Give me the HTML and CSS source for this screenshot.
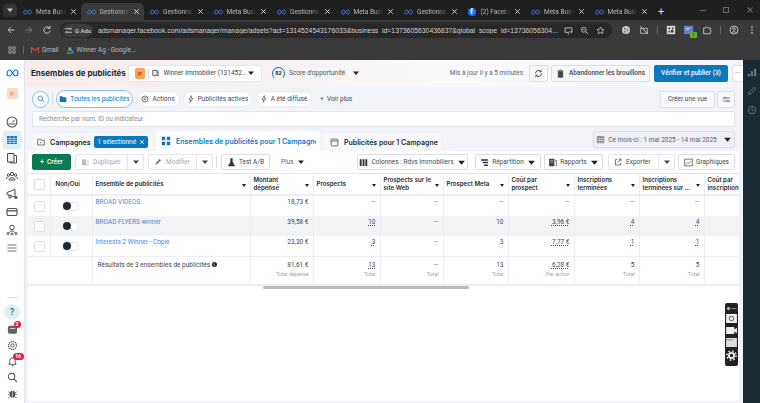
FILE: index.html
```html
<!DOCTYPE html>
<html lang="fr">
<head>
    <meta charset="UTF-8">
    <title>Ensembles de publicités</title>
    <link rel="stylesheet" href="styles.css">
</head>
<body>
    <svg class="defs" width="0" height="0">
        <symbol id="meta" viewBox="0 0 24 14"><path d="M2 9.500C2 5 4 1.500 6.500 1.500c4 0 7 11 11 11 2.500 0 4.500-2 4.500-5.500S20 1.500 17.500 1.500c-4 0-7 11-11 11C3.500 12.500 2 11.500 2 9.500z" fill="none" stroke="currentColor" stroke-width="2.200"/></symbol>
        <symbol id="caret" viewBox="0 0 8 8"><path d="M1 2.500h6L4 6z" fill="currentColor"/></symbol>
        <symbol id="close" viewBox="0 0 8 8"><path d="M1.500 1.500l5 5M6.500 1.500l-5 5" stroke="currentColor" stroke-width="1.100" fill="none"/></symbol>
    </svg>

    <div class="tabstrip">
        <span class="tab-menu"><svg class="i6"><use href="#caret"/></svg></span>
        <div class="tab"><svg class="tab-icon"><use href="#meta"/></svg><span class="tab-label">Meta Busir</span><svg class="tab-x"><use href="#close"/></svg></div>
        <div class="tab active"><svg class="tab-icon"><use href="#meta"/></svg><span class="tab-label">Gestionnai</span><svg class="tab-x"><use href="#close"/></svg></div>
        <div class="tab"><svg class="tab-icon"><use href="#meta"/></svg><span class="tab-label">Gestionnai</span><svg class="tab-x"><use href="#close"/></svg></div>
        <div class="tab"><svg class="tab-icon"><use href="#meta"/></svg><span class="tab-label">Meta Busir</span><svg class="tab-x"><use href="#close"/></svg></div>
        <div class="tab"><svg class="tab-icon"><use href="#meta"/></svg><span class="tab-label">Gestionnai</span><svg class="tab-x"><use href="#close"/></svg></div>
        <div class="tab"><svg class="tab-icon"><use href="#meta"/></svg><span class="tab-label">Meta Busir</span><svg class="tab-x"><use href="#close"/></svg></div>
        <div class="tab"><svg class="tab-icon"><use href="#meta"/></svg><span class="tab-label">Gestionnai</span><svg class="tab-x"><use href="#close"/></svg></div>
        <div class="tab"><span class="fb-icon">f</span><span class="tab-label">(2) Facebo</span><svg class="tab-x"><use href="#close"/></svg></div>
        <div class="tab"><svg class="tab-icon"><use href="#meta"/></svg><span class="tab-label">Meta Busir</span><svg class="tab-x"><use href="#close"/></svg></div>
        <div class="tab"><svg class="tab-icon"><use href="#meta"/></svg><span class="tab-label">Meta Busir</span><svg class="tab-x"><use href="#close"/></svg></div>
        <span class="new-tab">+</span>
        <div class="window-controls">
            <span class="win-min"></span>
            <span class="win-max"></span>
            <svg class="win-close"><use href="#close"/></svg>
        </div>
    </div>

    <div class="toolbar">
        <div class="nav-buttons">
            <svg viewBox="0 0 12 12"><path d="M10 6H2.500M6 2.500L2.500 6 6 9.500" fill="none" stroke="#c7c7c7" stroke-width="1.200"/></svg>
            <svg viewBox="0 0 12 12"><path d="M2 6h7.500M6 2.500L9.500 6 6 9.500" fill="none" stroke="#777" stroke-width="1.200"/></svg>
            <svg viewBox="0 0 12 12"><path d="M9.800 6.500a3.800 3.800 0 1 1-1-3M9.500 1v3H6.500" fill="none" stroke="#c7c7c7" stroke-width="1.200"/></svg>
        </div>
        <div class="omnibox">
            <span class="chip"><svg viewBox="0 0 8 8"><path d="M0 2h5M7 2h1M0 6h1M3 6h5" stroke="#ccc" stroke-width="1"/><circle cx="6" cy="2" r="1" fill="none" stroke="#ccc" stroke-width=".8"/><circle cx="2" cy="6" r="1" fill="none" stroke="#ccc" stroke-width=".8"/></svg>G Ads</span>
            <span class="url">adsmanager.facebook.com/adsmanager/manage/adsets?act=1314524543176033&amp;business_id=1373605630436837&amp;global_scope_id=13736056304...</span>
            <div class="omni-icons">
                <svg viewBox="0 0 12 12"><path d="M9.500 8.500h1v-6h-9v6h5M5 10.500h2" fill="none" stroke="#ccc" stroke-width="1.100"/><path d="M7 6.500l2 2 2-2" fill="none" stroke="#ccc"/></svg>
                <svg viewBox="0 0 12 12"><circle cx="5" cy="5" r="3.300" fill="none" stroke="#ccc" stroke-width="1.100"/><path d="M7.500 7.500l3 3M3.500 5h3" stroke="#ccc" stroke-width="1.100"/></svg>
                <svg viewBox="0 0 12 12"><path d="M6 1.300l1.400 3 3.300.4-2.400 2.200.6 3.300L6 8.600l-2.900 1.600.6-3.300-2.400-2.200 3.300-.4z" fill="none" stroke="#ccc" stroke-width="1"/></svg>
            </div>
        </div>
        <div class="ext-icons">
            <svg viewBox="0 0 12 12"><circle cx="6" cy="6" r="4.800" fill="#c9c9c9"/><circle cx="4.300" cy="4.500" r=".9" fill="#444"/><circle cx="7.500" cy="6" r=".9" fill="#444"/><circle cx="4.800" cy="8" r=".9" fill="#444"/></svg>
            <svg viewBox="0 0 12 12"><path d="M2 4h8v6H2z" fill="none" stroke="#c7c7c7"/><path d="M1.500 1.500l9 9" stroke="#c7c7c7" stroke-width="1.200"/></svg>
            <span class="tb-sep"></span>
            <svg viewBox="0 0 12 12"><rect x="1" y="1" width="10" height="10" fill="#ddd"/><path d="M3 3h2v2H3zM7 3h2v2H7zM3 7h2v2H3zM6 6h3v3H6z" fill="#333"/></svg>
            <span class="ext-badge-wrap"><svg viewBox="0 0 12 12"><rect x="0" y="1" width="11" height="10" fill="#5b7fc8"/><path d="M2 4h6M2 6h4" stroke="#dde"/></svg><span class="ext-badge">1</span></span>
            <svg viewBox="0 0 12 12"><path d="M2 3.500h2.500a1.300 1.300 0 0 1 2.500 0H10v2.500a1.300 1.300 0 0 1 0 2.500V10.500H2z" fill="none" stroke="#c7c7c7" stroke-width="1.100"/></svg>
            <span class="tb-sep"></span>
            <svg viewBox="0 0 12 12"><circle cx="6" cy="6" r="4.800" fill="none" stroke="#c7c7c7" stroke-width="1.100"/><circle cx="6" cy="4.800" r="1.600" fill="none" stroke="#c7c7c7"/><path d="M3.200 9.500c.6-2 5-2 5.600 0" fill="none" stroke="#c7c7c7"/></svg>
            <svg viewBox="0 0 12 12"><circle cx="6" cy="2.500" r="1" fill="#c7c7c7"/><circle cx="6" cy="6" r="1" fill="#c7c7c7"/><circle cx="6" cy="9.500" r="1" fill="#c7c7c7"/></svg>
        </div>
    </div>

    <div class="bookmarks">
        <svg class="bm-apps" viewBox="0 0 10 10"><path d="M1 1h3v3H1zM6 1h3v3H6zM1 6h3v3H1zM6 6h3v3H6z" fill="none" stroke="#bbb" stroke-width=".9"/></svg>
        <span class="tb-sep bm-sep"></span>
        <span class="bm-item"><svg viewBox="0 0 10 8"><path d="M.5 7.500v-7L5 4 9.500.5v7" fill="none" stroke="#e5483b" stroke-width="1.300"/></svg>Gmail</span>
        <span class="bm-item"><svg viewBox="0 0 10 9"><path d="M3.500.500h3L5 3.500 3 7z" fill="#f4b400"/><path d="M6.500.500L10 7H7L4.500 2.500z" fill="#3a80f0"/><path d="M0 7h10l-1.500 2H1.500z" fill="#2ba24c"/></svg>Winner Ag - Google...</span>
    </div>

    <div class="app">
        <nav class="rail">
            <svg class="rail-meta"><use href="#meta"/></svg>
            <span class="rail-account">P</span>
            <div class="rail-group">
                <svg viewBox="0 0 12 12"><circle cx="6" cy="6" r="5" fill="none" stroke="#4b4f56" stroke-width="1.100"/><path d="M6 6.500l2.500-2.500M2.500 8h7" stroke="#4b4f56"/></svg>
                <span class="rail-active"><svg viewBox="0 0 12 12"><path d="M1 2h10v8H1z" fill="#0a78be"/><path d="M1 4.500h10M1 6.500h10M1 8.500h10M4 2v8M8 2v8" stroke="#dcebf6" stroke-width=".6"/></svg></span>
                <svg viewBox="0 0 12 12"><path d="M1.500 1.500h6.500v8.500H1.500z" fill="#eee" stroke="#4b4f56"/><path d="M8 3.500h2.500v7.500H4V10" fill="none" stroke="#4b4f56"/></svg>
                <svg viewBox="0 0 12 12"><circle cx="6" cy="4" r="1.700" fill="none" stroke="#4b4f56"/><circle cx="2.500" cy="5" r="1.200" fill="none" stroke="#4b4f56"/><circle cx="9.500" cy="5" r="1.200" fill="none" stroke="#4b4f56"/><path d="M3 10c0-3 6-3 6 0zM.5 9c0-2 1.500-2 2-2M11.500 9c0-2-1.500-2-2-2" fill="none" stroke="#4b4f56"/></svg>
                <svg viewBox="0 0 12 12"><path d="M1 4.500L9 1.500v7.500L1 6.500zM3 6.500V10h2V7.500" fill="none" stroke="#4b4f56"/><circle cx="10" cy="9.500" r="1.500" fill="#4b4f56"/></svg>
                <svg viewBox="0 0 12 12"><rect x="1" y="2.500" width="10" height="7" rx="1.200" fill="none" stroke="#4b4f56" stroke-width="1.100"/><path d="M1 4.800h10" stroke="#4b4f56" stroke-width="1.300"/></svg>
                <svg viewBox="0 0 12 12"><circle cx="6" cy="3.500" r="2.300" fill="none" stroke="#4b4f56"/><path d="M3.500 8.500c0-2 5-2 5 0" fill="none" stroke="#4b4f56"/><circle cx="2" cy="9.500" r="1" fill="none" stroke="#4b4f56"/><circle cx="6" cy="10" r="1" fill="none" stroke="#4b4f56"/><circle cx="10" cy="9.500" r="1" fill="none" stroke="#4b4f56"/></svg>
                <svg viewBox="0 0 12 12"><path d="M1.500 3h9M1.500 6h9M1.500 9h9" stroke="#606770" stroke-width=".9"/></svg>
            </div>
            <div class="rail-bottom">
                <span class="rail-rule"></span>
                <span class="rail-help">?</span>
                <span class="rail-badged"><svg viewBox="0 0 12 12"><rect x="1" y="2" width="10" height="8.500" rx="2" fill="#5f6368"/><path d="M3 5h6" stroke="#ddd"/></svg><span class="badge badge-inbox">2</span></span>
                <svg viewBox="0 0 12 12"><circle cx="6" cy="6" r="1.800" fill="none" stroke="#4b4f56"/><circle cx="6" cy="6" r="4.300" fill="none" stroke="#4b4f56" stroke-width="1.300" stroke-dasharray="1.500 .7"/></svg>
                <span class="rail-badged"><svg viewBox="0 0 12 12"><path d="M2 9h8L9 7.500V5a3 3 0 0 0-6 0v2.500zM5 10.500h2" fill="none" stroke="#4b4f56"/></svg><span class="badge badge-bell">16</span></span>
                <svg viewBox="0 0 12 12"><circle cx="5" cy="5" r="3.500" fill="none" stroke="#4b4f56" stroke-width="1.100"/><path d="M7.500 7.500l3.200 3.200" stroke="#4b4f56" stroke-width="1.200"/></svg>
                <svg viewBox="0 0 12 12"><ellipse cx="6" cy="6.800" rx="3" ry="3.800" fill="#4b4f56"/><path d="M1.500 4l2 1.500M10.500 4l-2 1.500M1 7h2M9 7h2M1.500 10.500l2-1M10.500 10.500l-2-1" stroke="#4b4f56" stroke-width=".8"/><path d="M6 3v7.500" stroke="#eee" stroke-width=".7"/></svg>
            </div>
        </nav>

        <main class="main">
            <header class="page-head">
                <h1 class="page-title">Ensembles de publicités</h1>
                <div class="account-picker">
                    <span class="account-tile">P</span>
                    <span class="picker-sep"></span>
                    <span class="account-glyph"><svg viewBox="0 0 10 10"><rect x="1" y="2" width="5.500" height="6" fill="none" stroke="#555"/><path d="M6.500 4h2.500v4H6.500" fill="none" stroke="#555"/></svg></span>
                    <span class="account-name">Winner Immobilier (131452...</span>
                    <svg class="caret"><use href="#caret"/></svg>
                </div>
                <div class="score">
                    <span class="score-gauge">82</span>
                    <span>Score d'opportunité</span>
                    <svg class="caret"><use href="#caret"/></svg>
                </div>
                <span class="updated">Mis à jour il y a 5 minutes</span>
                <button class="btn btn-refresh"><svg viewBox="0 0 12 12"><path d="M10 6a4 4 0 0 1-7 2.700M2 6a4 4 0 0 1 7-2.700" fill="none" stroke="#333" stroke-width="1.200"/><path d="M9.500 1v2.800H7M2.500 11V8.200H5" fill="none" stroke="#333"/></svg></button>
                <button class="btn btn-discard"><svg viewBox="0 0 10 12"><path d="M2 3.500h6v7.500H2zM1 2.500h8M3.500 1.500h3" fill="#444" stroke="#444"/></svg>Abandonner les brouillons</button>
                <button class="btn btn-publish">Vérifier et publier (3)</button>
                <button class="btn btn-more">···</button>
            </header>

            <section class="filters">
                <div class="filter-row">
                    <span class="search-round"><svg viewBox="0 0 12 12"><circle cx="5" cy="5" r="3.500" fill="none" stroke="#0a78be" stroke-width="1.100"/><path d="M7.500 7.500l3 3" stroke="#0a78be" stroke-width="1.200"/></svg></span>
                    <span class="filter-sep"></span>
                    <span class="pill pill-on"><svg viewBox="0 0 12 10"><path d="M1 1h4l1 1.500h5V9.500H1z" fill="#0a78be"/></svg>Toutes les publicités</span>
                    <span class="pill pill-actions"><svg viewBox="0 0 12 12"><circle cx="6" cy="6" r="4.500" fill="none" stroke="#444" stroke-width="1.100"/><path d="M3.500 4.500h5M4.500 8l1.500-2 1.500 2" fill="none" stroke="#444"/></svg>Actions</span>
                    <span class="pill pill-active"><svg viewBox="0 0 12 12"><path d="M6.500 1L3 7h2.500l-1 4L9 5H6.500z" fill="none" stroke="#444"/></svg>Publicités actives</span>
                    <span class="pill pill-sent"><svg viewBox="0 0 12 12"><path d="M6.500 1L3 7h2.500l-1 4L9 5H6.500z" fill="none" stroke="#444"/></svg>A été diffusé</span>
                    <span class="see-more">+&nbsp; Voir plus</span>
                    <button class="btn btn-view">Créer une vue</button>
                    <button class="btn btn-tune"><svg viewBox="0 0 12 10"><path d="M1 3h10M1 7h10" stroke="#555"/><circle cx="4" cy="3" r="1.200" fill="#fff" stroke="#555" stroke-width=".8"/><circle cx="8" cy="7" r="1.200" fill="#fff" stroke="#555" stroke-width=".8"/></svg></button>
                </div>
                <div class="search-box">Recherche par nom, ID ou indicateur</div>
                <div class="level-row">
                    <div class="level-tab level-campaign">
                        <svg viewBox="0 0 12 10"><path d="M1 1h4l1 1.500h5V9.500H1z" fill="none" stroke="#444"/><path d="M5 4.500l2 1.300-2 1.300z" fill="#444"/></svg>
                        <span class="level-name">Campagnes</span>
                        <span class="selected-chip">1 sélectionné <svg class="chip-x"><use href="#close"/></svg></span>
                    </div>
                    <div class="level-tab level-adsets">
                        <svg viewBox="0 0 12 12"><path d="M1 1h4v4H1zM7 1h4v4H7zM1 7h4v4H1zM7 7h4v4H7z" fill="#0a78be"/></svg>
                        <span class="level-name level-clip">Ensembles de publicités pour 1 Campagne</span>
                    </div>
                    <div class="level-tab level-ads">
                        <svg viewBox="0 0 12 12"><rect x="1.500" y="1.500" width="9" height="9" rx="1" fill="none" stroke="#444"/><path d="M1.500 4h9" stroke="#444"/></svg>
                        <span class="level-name">Publicités pour 1 Campagne</span>
                    </div>
                    <button class="btn btn-date"><svg viewBox="0 0 12 12"><rect x="1" y="1.500" width="10" height="9.500" fill="#8a8d91"/><path d="M1 4.500h10M1 7.500h10M4.300 4.500v6.500M7.600 4.500v6.500" stroke="#e9ecf1" stroke-width=".6"/></svg>Ce mois-ci : 1 mai 2025 - 14 mai 2025<svg class="caret"><use href="#caret"/></svg></button>
                </div>
            </section>

            <section class="card">
                <div class="actions">
                    <button class="btn btn-create">+&nbsp; Créer</button>
                    <div class="split split-dup">
                        <span class="split-main muted"><svg viewBox="0 0 12 12"><path d="M1.500 2h6v8.500h-6z" fill="#bbb"/><path d="M9 3.500h1.500v7H4" fill="none" stroke="#bbb"/></svg>Dupliquer</span>
                        <span class="split-arrow"><svg class="caret"><use href="#caret"/></svg></span>
                    </div>
                    <div class="split split-edit">
                        <span class="split-main muted"><svg viewBox="0 0 12 12"><path d="M2 10l1-3 5.500-5.500 2 2L5 9z" fill="#777"/></svg>Modifier</span>
                        <span class="split-arrow"><svg class="caret"><use href="#caret"/></svg></span>
                    </div>
                    <span class="action-sep"></span>
                    <button class="btn btn-tool btn-ab"><svg viewBox="0 0 12 12"><path d="M4.500 1h3M5 1v4L2 10.500h8L7 5V1" fill="#333" stroke="#333"/></svg>Test A/B</button>
                    <span class="plus-menu">Plus <svg class="caret"><use href="#caret"/></svg></span>
                    <button class="btn btn-tool btn-cols"><svg viewBox="0 0 12 12"><path d="M1 1.500h2.500v9H1zM4.800 1.500h2.500v9H4.800zM8.500 1.500H11v9H8.500z" fill="#333"/></svg>Colonnes : Rdvs Immobiliers<svg class="caret"><use href="#caret"/></svg></button>
                    <button class="btn btn-tool btn-break"><svg viewBox="0 0 12 12"><path d="M1.500 1.500h9v2h-9zM3.500 5h7v2h-7zM5.500 8.500h5v2h-5z" fill="#333"/></svg>Répartition<svg class="caret"><use href="#caret"/></svg></button>
                    <button class="btn btn-tool btn-reports"><svg viewBox="0 0 12 12"><path d="M1.500 1h7v10h-7z" fill="#444"/><path d="M9.500 3h1.500v8" fill="none" stroke="#444"/><path d="M3 3.500h4M3 5.500h4" stroke="#ddd" stroke-width=".7"/></svg>Rapports<svg class="caret"><use href="#caret"/></svg></button>
                    <div class="split split-export">
                        <span class="split-main"><svg viewBox="0 0 12 12"><path d="M5 2.500H2v8h8V7" fill="none" stroke="#444" stroke-width="1.100"/><path d="M5.500 6.500L10 2M7 1.500h3.500V5" fill="none" stroke="#444" stroke-width="1.100"/></svg>Exporter</span>
                        <span class="split-arrow"><svg class="caret"><use href="#caret"/></svg></span>
                    </div>
                    <button class="btn btn-tool btn-charts"><svg viewBox="0 0 12 12"><rect x="1" y="1.500" width="10" height="9" fill="none" stroke="#555"/><path d="M2.500 8.500l2.500-2.500 1.500 1.500L9.500 4" fill="none" stroke="#555"/></svg>Graphiques</button>
                </div>

                <table class="grid">
                    <colgroup>
                        <col class="c-check"><col class="c-toggle"><col class="c-name"><col class="c-spend"><col class="c-leads">
                        <col class="c-web"><col class="c-meta"><col class="c-cost"><col class="c-reg"><col class="c-reg"><col class="c-last">
                    </colgroup>
                    <thead>
                        <tr>
                            <th><span class="check"></span></th>
                            <th class="th-toggle">Non/Oui</th>
                            <th class="sort">Ensemble de publicités</th>
                            <th class="sort spend">Montant dépensé</th>
                            <th class="sort">Prospects</th>
                            <th class="sort">Prospects sur le site Web</th>
                            <th class="sort">Prospect Meta</th>
                            <th class="sort">Coût par prospect</th>
                            <th class="sort">Inscriptions terminées</th>
                            <th class="sort">Inscriptions terminées sur ...</th>
                            <th class="last">Coût par inscription</th>
                        </tr>
                    </thead>
                    <tbody>
                        <tr class="first-row">
                            <td><span class="check"></span></td>
                            <td><span class="toggle"></span></td>
                            <td class="name">BROAD VIDEOS</td>
                            <td class="num spend">18,73 €</td>
                            <td class="num dash">—</td>
                            <td class="num dash">—</td>
                            <td class="num dash">—</td>
                            <td class="num dash">—</td>
                            <td class="num dash">—</td>
                            <td class="num dash">—</td>
                            <td></td>
                        </tr>
                        <tr class="shaded">
                            <td><span class="check"></span></td>
                            <td><span class="toggle"></span></td>
                            <td class="name">BROAD FLYERS winner</td>
                            <td class="num spend">39,58 €</td>
                            <td class="num"><u>10</u></td>
                            <td class="num dash">—</td>
                            <td class="num">10</td>
                            <td class="num"><u>3,96 €</u></td>
                            <td class="num"><u>4</u></td>
                            <td class="num"><u>4</u></td>
                            <td></td>
                        </tr>
                        <tr>
                            <td><span class="check"></span></td>
                            <td><span class="toggle"></span></td>
                            <td class="name">Interests 2 Winner - Copie</td>
                            <td class="num spend">23,30 €</td>
                            <td class="num"><u>3</u></td>
                            <td class="num dash">—</td>
                            <td class="num">3</td>
                            <td class="num"><u>7,77 €</u></td>
                            <td class="num"><u>1</u></td>
                            <td class="num"><u>1</u></td>
                            <td></td>
                        </tr>
                        <tr class="totals">
                            <td colspan="2"></td>
                            <td class="total-label">Résultats de 3 ensembles de publicités <span class="info">i</span></td>
                            <td class="num spend">81,61 €<small>Total dépensé</small></td>
                            <td class="num"><u>13</u><small>Total</small></td>
                            <td class="num dash">—<small>Total</small></td>
                            <td class="num">13<small>Total</small></td>
                            <td class="num"><u>6,28 €</u><small>Par action</small></td>
                            <td class="num">5<small>Total</small></td>
                            <td class="num">5<small>Total</small></td>
                            <td></td>
                        </tr>
                    </tbody>
                </table>
                <div class="hscroll"><span class="hscroll-thumb"></span></div>

                <div class="float-widget">
                    <svg class="fw-top" viewBox="0 0 12 6"><circle cx="2.500" cy="3" r="2" fill="#aaa"/><path d="M6 3h6" stroke="#999"/></svg>
                    <svg viewBox="0 0 12 10"><rect width="12" height="10" fill="#eee"/><circle cx="6" cy="5" r="2.500" fill="none" stroke="#444"/></svg>
                    <svg viewBox="0 0 12 10"><path d="M0 1h9v8H0zM9 4l3-2v6l-3-2z" fill="#eee"/></svg>
                    <svg viewBox="0 0 12 10"><path d="M0 0h12v10H0z" fill="#ddd"/><path d="M0 2h8" stroke="#444" stroke-width=".6"/></svg>
                    <svg viewBox="0 0 12 12"><circle cx="6" cy="6" r="2.800" fill="none" stroke="#eee" stroke-width="2"/><circle cx="6" cy="6" r="5" fill="none" stroke="#eee" stroke-width="1.700" stroke-dasharray="1.800 2.100"/></svg>
                </div>
            </section>
        </main>

        <aside class="side-panel">
            <svg viewBox="0 0 12 12"><path d="M1 11V8h2.500v3zM4.700 11V5h2.500v6zM8.500 11V2H11v9z" fill="#6f7b82"/></svg>
            <svg viewBox="0 0 12 12"><path d="M2 10l1-3 5.500-5.500 2 2L5 9z" fill="none" stroke="#6f7b82"/></svg>
            <svg viewBox="0 0 12 12"><circle cx="6" cy="6" r="4.500" fill="none" stroke="#6f7b82"/><path d="M6 3v3.300l2 1" fill="none" stroke="#6f7b82"/></svg>
        </aside>
    </div>
</body>
</html>
```

FILE: styles.css
```css
* {
    box-sizing: border-box;
}

body {
    margin: 0;
    width: 760px;
    height: 403px;
    overflow: hidden;
    background-color: #fff;
    color: #1c2b33;
    font-family: Roboto, "Liberation Sans", sans-serif;
    font-size: 6.5px;
}

button {
    font-family: inherit;
    margin: 0;
    padding: 0;
}

svg {
    flex: none;
    display: block;
}

.defs {
    position: absolute;
}

/* browser chrome */
.tabstrip {
    display: flex;
    align-items: center;
    height: 20px;
    background-color: #1f1f1f;
    color: #c7c7c7;
    padding: 3px 0 0 3px;
}

.tab-menu {
    width: 14px;
    height: 13px;
    margin-bottom: 3px;
    border-radius: 4px;
    background-color: #333;
    display: flex;
    align-items: center;
    justify-content: center;
}

.i6 {
    width: 8px;
    height: 8px;
}

.tab {
    width: 63.5px;
    height: 17px;
    flex: none;
    display: flex;
    align-items: center;
    padding: 0 4px 0 6px;
    border-radius: 5px 5px 0 0;
    font-size: 6.5px;
    color: #b9b9b9;
}

.tab.active {
    background-color: #3a3a3a;
}

.tab-icon {
    width: 9px;
    height: 6px;
    color: #4d8df6;
    margin-right: 4px;
}

.fb-icon {
    width: 8px;
    height: 8px;
    margin-right: 5px;
    border-radius: 50%;
    background-color: #1877f2;
    color: #fff;
    font-weight: bold;
    font-size: 7px;
    line-height: 9px;
    text-align: center;
}

.tab-label {
    flex: 1;
    overflow: hidden;
    white-space: nowrap;
    -webkit-mask-image: linear-gradient(90deg, #000 70%, transparent);
    mask-image: linear-gradient(90deg, #000 70%, transparent);
}

.tab-x {
    width: 7px;
    height: 7px;
    margin-left: 4px;
    color: #ddd;
}

.new-tab {
    margin-left: 6px;
    font-size: 11px;
    color: #ddd;
}

.window-controls {
    margin-left: auto;
    display: flex;
    align-items: center;
    gap: 17px;
    padding: 0 6px 3px 0;
}

.win-min {
    width: 6px;
    border-top: 1px solid #666;
}

.win-max {
    width: 6px;
    height: 6px;
    border: 1px solid #666;
}

.win-close {
    width: 8px;
    height: 8px;
    color: #666;
}

.toolbar {
    display: flex;
    align-items: center;
    height: 20px;
    background-color: #3a3a3a;
    padding-left: 6px;
}

.nav-buttons {
    display: flex;
    gap: 8px;
    width: 54px;
}

.nav-buttons svg {
    width: 10px;
    height: 10px;
}

.omnibox {
    display: flex;
    align-items: center;
    width: 552px;
    height: 16px;
    border-radius: 8px;
    background-color: #282828;
    padding: 0 6px 0 2px;
    color: #c7c7c7;
}

.chip {
    display: flex;
    align-items: center;
    gap: 3px;
    width: 31px;
    height: 13px;
    padding-left: 3px;
    border-radius: 7px;
    background-color: #3c3c3c;
    font-weight: 600;
    font-size: 6px;
    white-space: nowrap;
}

.chip svg {
    width: 7px;
    height: 7px;
}

.url {
    width: 461px;
    margin-left: 5px;
    font-family: "Liberation Sans", sans-serif;
    font-size: 6.850px;
    color: #cfcfcf;
    white-space: nowrap;
    overflow: hidden;
}

.omni-icons {
    display: flex;
    gap: 7px;
    margin-left: 5px;
}

.omni-icons svg {
    width: 9px;
    height: 9px;
}

.ext-icons {
    display: flex;
    align-items: center;
    gap: 8px;
    margin-left: 9px;
}

.ext-icons > svg,
.ext-badge-wrap svg {
    width: 10px;
    height: 10px;
}

.ext-badge-wrap {
    position: relative;
}

.ext-badge {
    position: absolute;
    right: -3px;
    bottom: -3px;
    width: 7px;
    height: 6px;
    border-radius: 1px;
    background-color: #5cb531;
    color: #111;
    font-size: 5px;
    line-height: 6px;
    text-align: center;
}

.tb-sep {
    width: 1px;
    height: 8px;
    background-color: #666;
}

.bookmarks {
    display: flex;
    align-items: center;
    height: 20px;
    background-color: #3a3a3a;
    padding-left: 8px;
    color: #bdbdbd;
    font-size: 6.400px;
}

.bm-apps {
    width: 8px;
    height: 8px;
}

.bm-sep {
    margin: 0 7px;
}

.bm-item {
    display: flex;
    align-items: center;
    gap: 3px;
    margin-right: 7px;
}

.bm-item svg {
    width: 8px;
    height: 7px;
}

/* app frame */
.app {
    display: flex;
    height: 343px;
    background-color: #fff;
}

.rail {
    width: 25px;
    flex: none;
    display: flex;
    flex-direction: column;
    align-items: center;
    background-color: #fff;
    border-right: 1px solid #e1e6ee;
    padding-top: 9px;
    position: relative;
}

.rail-meta {
    width: 13px;
    height: 8px;
    color: #0a6ff0;
}

.rail-account {
    width: 11px;
    height: 11px;
    margin-top: 11px;
    border-radius: 2px;
    background-color: #fbd9c2;
    color: #c79a80;
    font-size: 6px;
    font-weight: 600;
    line-height: 11px;
    text-align: center;
}

.rail-group {
    display: flex;
    flex-direction: column;
    align-items: center;
    gap: 6px;
    margin-top: 17px;
}

.rail-group > svg,
.rail-active svg {
    width: 12px;
    height: 12px;
}

.rail-active {
    width: 18px;
    height: 18px;
    margin: -3px 0;
    border-radius: 2px;
    background-color: #e2eef7;
    display: flex;
    align-items: center;
    justify-content: center;
}

.rail-bottom {
    margin-top: auto;
    padding-bottom: 4px;
    display: flex;
    flex-direction: column;
    align-items: center;
    gap: 5px;
}

.rail-bottom > svg,
.rail-badged svg {
    width: 11px;
    height: 11px;
}

.rail-rule {
    width: 11px;
    border-top: 1px solid #dadde1;
    margin-bottom: 1px;
}

.rail-help {
    width: 16px;
    height: 16px;
    margin-bottom: -1px;
    border-radius: 50%;
    background-color: #e0f1ef;
    color: #0b7c8c;
    font-size: 9px;
    font-weight: 600;
    line-height: 16px;
    text-align: center;
}

.rail-badged {
    position: relative;
}

.badge {
    position: absolute;
    height: 7px;
    border-radius: 4px;
    background-color: #e41e3f;
    color: #fff;
    font-size: 5px;
    font-weight: 700;
    line-height: 7px;
    text-align: center;
}

.badge-inbox {
    width: 7px;
    top: -3px;
    right: -3px;
}

.badge-bell {
    width: 11px;
    top: -3px;
    right: -6px;
}

.main {
    flex: 1;
    min-width: 0;
    display: flex;
    flex-direction: column;
    background-color: #f1f3f8;
    position: relative;
}

.side-panel {
    width: 17px;
    flex: none;
    background-color: #1c2b33;
    display: flex;
    flex-direction: column;
    align-items: center;
    gap: 9px;
    padding-top: 7px;
}

.side-panel svg {
    width: 10px;
    height: 10px;
}

/* page header */
.page-head {
    display: flex;
    align-items: center;
    height: 27px;
    padding: 0 0 1px 6px;
    background: linear-gradient(90deg, #f7ecea, #f6f1f3 35%, #fafafc 60%, #f3f5f9);
    overflow: hidden;
}

.page-title {
    margin: 0;
    width: 97px;
    flex: none;
    font-family: Inter, sans-serif;
    font-size: 8px;
    font-weight: 700;
    white-space: nowrap;
}

.account-picker {
    display: flex;
    align-items: center;
    width: 134px;
    height: 17px;
    flex: none;
    padding: 0 6px;
    border: 1px solid #e4e6eb;
    border-radius: 2px;
    background-color: #fff;
    color: #444;
}

.account-tile {
    width: 11px;
    height: 11px;
    border-radius: 2px;
    background-color: #f7a35c;
    color: #a24d16;
    font-size: 6px;
    font-weight: 700;
    line-height: 11px;
    text-align: center;
}

.picker-sep {
    width: 1px;
    height: 11px;
    margin: 0 3px;
    background-color: #ddd;
}

.account-glyph {
    width: 9px;
    height: 9px;
    margin-right: 4px;
    border-radius: 50%;
    background-color: #e4e6eb;
}

.account-name {
    flex: 1;
    white-space: nowrap;
}

.caret {
    width: 8px;
    height: 8px;
    color: #222;
}

.score {
    display: flex;
    align-items: center;
    gap: 4px;
    margin-left: 10px;
    color: #555;
    white-space: nowrap;
}

.score .caret {
    margin-left: 3px;
}

.score-gauge {
    width: 13px;
    height: 13px;
    border-radius: 50%;
    border: 1.500px solid #0a78be;
    border-bottom-color: transparent;
    color: #1c2b33;
    font-size: 5.500px;
    font-weight: 700;
    line-height: 10px;
    text-align: center;
}

.updated {
    margin-left: auto;
    margin-right: 6px;
    color: #606770;
    white-space: nowrap;
}

.btn {
    display: flex;
    align-items: center;
    justify-content: center;
    height: 17px;
    flex: none;
    border: 1px solid #dadde6;
    border-radius: 2px;
    background-color: #f7f8fa;
    color: #444950;
    font-size: 6.5px;
    white-space: nowrap;
}

.btn svg {
    width: 9px;
    height: 9px;
}

.btn-refresh {
    width: 19px;
    margin-right: 3px;
}

.btn-discard {
    width: 99px;
    gap: 4px;
    margin-right: 4px;
    font-weight: 500;
}

.btn-publish {
    width: 74px;
    margin-right: 4px;
    border-color: #0a78be;
    background-color: #0a78be;
    color: #fff;
    font-weight: 500;
}

.btn-more {
    width: 20px;
    margin-right: -9px;
    justify-content: flex-start;
    padding-left: 2px;
    background-color: #fff;
}

/* filters */
.filters {
    display: flex;
    flex-direction: column;
    padding: 3px 8px 0 7px;
}

.filter-row {
    display: flex;
    align-items: center;
    height: 18px;
}

.search-round {
    width: 17px;
    height: 17px;
    border-radius: 50%;
    border: 1px solid #8cc0e2;
    background-color: #fff;
    display: flex;
    align-items: center;
    justify-content: center;
}

.search-round svg {
    width: 8px;
    height: 8px;
}

.filter-sep {
    width: 1px;
    height: 12px;
    margin: 0 3px;
    background-color: #d8dbe2;
}

.pill {
    display: flex;
    align-items: center;
    justify-content: center;
    gap: 3px;
    height: 16px;
    margin-right: 3.500px;
    border: 1px solid #e8eaef;
    border-radius: 8px;
    background-color: #fff;
    color: #444950;
    white-space: nowrap;
}

.pill svg {
    width: 8px;
    height: 8px;
}

.pill-on {
    width: 77px;
    height: 18px;
    border-radius: 9px;
    border-color: #8cc0e2;
    color: #0a78be;
}

.pill-actions {
    width: 43px;
}

.pill-active {
    width: 69px;
}

.pill-sent {
    width: 56px;
}

.see-more {
    margin-left: 5px;
    color: #444950;
    white-space: nowrap;
}

.btn-view {
    width: 55px;
    margin-left: auto;
    background-color: #f7f8fa;
}

.btn-tune {
    width: 18px;
    margin-left: 2px;
}

.search-box {
    height: 16px;
    margin-top: 3px;
    padding-left: 6px;
    border: 1px solid #e2e5ec;
    border-radius: 2px;
    background-color: #fff;
    color: #8a8d91;
    line-height: 14px;
}

.level-row {
    display: flex;
    align-items: flex-end;
    height: 23px;
    margin-top: 1px;
}

.level-tab {
    display: flex;
    align-items: center;
    height: 18px;
    padding-left: 5px;
    border-radius: 3px 3px 0 0;
    background-color: #f7f8fa;
}

.level-tab svg {
    width: 8px;
    height: 8px;
}

.level-campaign {
    width: 120px;
    margin-right: 4px;
}

.level-name {
    margin-left: 5px;
    font-family: Inter, sans-serif;
    font-size: 7px;
    font-weight: 600;
    white-space: nowrap;
}

.selected-chip {
    display: flex;
    align-items: center;
    justify-content: space-between;
    width: 54px;
    height: 12px;
    margin-left: 3px;
    padding: 0 3px 0 4px;
    border-radius: 2px;
    background-color: #0a78be;
    color: #fff;
    white-space: nowrap;
}

.level-tab .chip-x {
    width: 6px;
    height: 6px;
}

.level-adsets {
    width: 164px;
    height: 20px;
    margin-right: 4px;
    background-color: #fff;
    color: #0a78be;
    padding-right: 4px;
}

.level-adsets svg {
    width: 10px;
    height: 10px;
}

.level-clip {
    margin-left: 5px;
    overflow: hidden;
}

.level-ads {
    width: 117px;
    padding-left: 6px;
    background-color: #f7f8fa;
}

.level-ads svg {
    width: 9px;
    height: 9px;
}

.btn-date {
    width: 142px;
    gap: 3px;
    margin-left: auto;
    margin-bottom: 3px;
    color: #5d6168;
    background-color: #eef0f5;
}

.btn-date .caret {
    margin-left: 3px;
}

/* table card */
.card {
    flex: 1;
    margin: 0 4px 2px 3px;
    border-radius: 3px;
    background-color: #fff;
    position: relative;
}

.actions {
    display: flex;
    align-items: center;
    height: 23px;
    padding: 0 0 0 4px;
    border-bottom: 1px solid #e4e6eb;
}

.actions .btn {
    background-color: #fff;
    height: 16px;
}

.actions .btn-create {
    width: 39px;
    margin-right: 4px;
    border-color: #097a52;
    background-color: #097a52;
    color: #fff;
    font-weight: 500;
}

.split {
    display: flex;
    height: 16px;
    border: 1px solid #e4e6eb;
    border-radius: 2px;
    background-color: #fff;
}

.split-main {
    display: flex;
    align-items: center;
    gap: 4px;
    padding-left: 5px;
    border-right: 1px solid #e4e6eb;
    color: #444950;
}

.split-main svg {
    width: 8px;
    height: 8px;
}

.split-main.muted {
    color: #a6a9ae;
}

.split-arrow {
    display: flex;
    align-items: center;
    justify-content: center;
    width: 15px;
}

.split-arrow .caret {
    color: #444;
}

.split-dup {
    width: 69px;
    margin-right: 4px;
}

.split-dup .split-main {
    width: 53px;
}

.split-edit {
    width: 65px;
}

.split-edit .split-main {
    width: 48px;
}

.action-sep {
    width: 1px;
    height: 12px;
    margin: 0 4px 0 3px;
    background-color: #d8dbe2;
}

.actions .btn-tool {
    gap: 3px;
    color: #444950;
}

.actions .btn-ab {
    width: 49px;
}

.plus-menu {
    display: flex;
    align-items: center;
    gap: 3px;
    width: 87px;
    padding-left: 11px;
    color: #606770;
}

.actions .btn-cols {
    width: 111px;
    margin-right: 7px;
}

.actions .btn-break {
    width: 66px;
    margin-right: 3px;
}

.actions .btn-reports {
    width: 59px;
    margin-right: 5px;
}

.split-export {
    width: 67px;
    margin-right: 3px;
}

.split-export .split-main {
    width: 51px;
}

.actions .btn-charts {
    width: 57px;
}

.grid {
    width: 711px;
    table-layout: fixed;
    border-collapse: collapse;
}

.c-check { width: 22px; }
.c-toggle { width: 42px; }
.c-name { width: 158px; }
.c-spend { width: 63px; }
.c-leads { width: 67px; }
.c-web { width: 63px; }
.c-meta { width: 65px; }
.c-cost { width: 66px; }
.c-reg { width: 65px; }
.c-last { width: 35px; }

.grid th {
    height: 21px;
    padding: 0 10px 0 3px;
    border-right: 1px solid #eceef1;
    border-bottom: 2px solid #eceef1;
    text-align: left;
    font-family: Inter, sans-serif;
    font-size: 6.100px;
    font-weight: 600;
    line-height: 8px;
    position: relative;
}

.grid th:first-child,
.grid td:first-child {
    padding: 0 0 0 6px;
}

.grid .th-toggle {
    padding-left: 5px;
}

.grid th.last {
    border-right: 0;
    padding-right: 0;
    overflow: hidden;
}

.grid th.sort::after {
    content: "";
    position: absolute;
    right: 4px;
    top: 10px;
    border: 2px solid transparent;
    border-top: 3px solid #222;
}

.grid .spend {
    border-right-color: #eceef1;
    border-left: 1px solid #c9ccd1;
}

.grid td {
    height: 20px;
    padding: 2px 4px 0 3px;
    border-right: 1px solid #eceef1;
    vertical-align: top;
    color: #444950;
    white-space: nowrap;
}

.grid td:first-child,
.grid td:nth-child(2) {
    vertical-align: middle;
    padding-top: 1px;
}

.grid .first-row td {
    height: 21px;
}

.shaded td {
    background-color: #f2f3f5;
}

.grid .name {
    color: #4a8ae0;
}

.num {
    text-align: right;
}

.grid .dash {
    color: #8a8d91;
}

.num u {
    text-decoration-style: dotted;
    text-underline-offset: 1px;
}

.check {
    display: block;
    width: 11px;
    height: 11px;
    border: 1px solid #dddfe3;
    border-radius: 2px;
    background-color: #fff;
}

.toggle {
    display: block;
    width: 17px;
    height: 9px;
    margin-left: 8px;
    border: 1px solid #e4e6eb;
    border-radius: 5px;
    background-color: #fff;
    position: relative;
}

.toggle::before {
    content: "";
    position: absolute;
    left: 0;
    top: -1px;
    width: 8px;
    height: 8px;
    border-radius: 50%;
    background-color: #1c2b33;
}

.grid .totals td {
    height: 29px;
    border-top: 1px solid #eceef1;
    border-bottom: 2px solid #eceef1;
    padding-top: 4px;
    vertical-align: top;
}

.grid .total-label {
    padding-left: 5px;
}

.info {
    display: inline-block;
    width: 5px;
    height: 5px;
    border-radius: 50%;
    background-color: #1c2b33;
    color: #fff;
    font-size: 4px;
    line-height: 5px;
    text-align: center;
    vertical-align: 1px;
}

.grid small {
    display: block;
    margin-top: 2px;
    font-size: 5.200px;
    color: #a0a3a8;
}

.hscroll {
    height: 3px;
    padding-left: 235px;
}

.hscroll-thumb {
    display: block;
    width: 206px;
    height: 3px;
    border-radius: 2px;
    background-color: #b9bbbe;
}

.float-widget {
    position: absolute;
    right: 1px;
    top: 152px;
    width: 13px;
    height: 63px;
    padding: 3px 1px;
    border-radius: 2px;
    background-color: #222;
    display: flex;
    flex-direction: column;
    align-items: center;
    gap: 3px;
}

.float-widget svg {
    width: 11px;
    height: 9px;
}

.float-widget .fw-top {
    height: 5px;
}

.float-widget svg:last-child {
    height: 11px;
}
```
